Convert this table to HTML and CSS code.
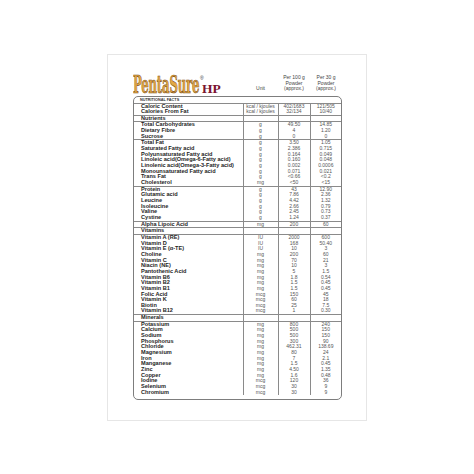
FILE: index.html
```html
<!DOCTYPE html>
<html>
<head>
<meta charset="utf-8">
<link rel="stylesheet" href="styles.css">
</head>
<body>
<div class="card">
  <div class="head">
    <div class="logo"><span class="brand">PentaSure</span><span class="reg">®</span><span class="hp">HP</span></div>
    <div class="hcol">Unit</div>
    <div class="hcol">Per 100 g<br>Powder<br>(approx.)</div>
    <div class="hcol">Per 30 g<br>Powder<br>(approx.)</div>
  </div>
  <div class="facts">
    <table>
      <colgroup><col class="c1"><col class="c2"><col class="c3"><col class="c4"></colgroup>
      <tbody class="title"><tr><td colspan="4">NUTRITIONAL FACTS</td></tr></tbody>
      <tbody>
        <tr><td>Caloric Content</td><td>kcal / kjoules</td><td>402/1683</td><td>121/505</td></tr>
        <tr><td>Calories From Fat</td><td>kcal / kjoules</td><td>32/134</td><td>10/40</td></tr>
      </tbody>
      <tbody><tr><td>Nutrients</td><td></td><td></td><td></td></tr></tbody>
      <tbody>
        <tr><td>Total Carbohydrates</td><td>g</td><td>49.50</td><td>14.85</td></tr>
        <tr><td>Dietary Fibre</td><td>g</td><td>4</td><td>1.20</td></tr>
        <tr><td>Sucrose</td><td>g</td><td>0</td><td>0</td></tr>
      </tbody>
      <tbody>
        <tr><td>Total Fat</td><td>g</td><td>3.50</td><td>1.05</td></tr>
        <tr><td>Saturated Fatty acid</td><td>g</td><td>2.386</td><td>0.715</td></tr>
        <tr><td>Polyunsaturated Fatty acid</td><td>g</td><td>0.164</td><td>0.049</td></tr>
        <tr><td>Linoleic acid(Omega-6-Fatty acid)</td><td>g</td><td>0.160</td><td>0.048</td></tr>
        <tr><td>Linolenic acid(Omega-3-Fatty acid)</td><td>g</td><td>0.002</td><td>0.0006</td></tr>
        <tr><td>Monounsaturated Fatty acid</td><td>g</td><td>0.071</td><td>0.021</td></tr>
        <tr><td>Trans Fat</td><td>g</td><td>&lt;0.66</td><td>&lt;0.2</td></tr>
        <tr><td>Cholesterol</td><td>mg</td><td>&lt;50</td><td>&lt;15</td></tr>
      </tbody>
      <tbody>
        <tr><td>Protein</td><td>g</td><td>43</td><td>12.90</td></tr>
        <tr><td>Glutamic acid</td><td>g</td><td>7.86</td><td>2.36</td></tr>
        <tr><td>Leucine</td><td>g</td><td>4.42</td><td>1.32</td></tr>
        <tr><td>Isoleucine</td><td>g</td><td>2.66</td><td>0.79</td></tr>
        <tr><td>Valine</td><td>g</td><td>2.45</td><td>0.73</td></tr>
        <tr><td>Cystine</td><td>g</td><td>1.24</td><td>0.37</td></tr>
      </tbody>
      <tbody><tr><td>Alpha Lipoic Acid</td><td>mg</td><td>200</td><td>60</td></tr></tbody>
      <tbody><tr><td>Vitamins</td><td></td><td></td><td></td></tr></tbody>
      <tbody>
        <tr><td>Vitamin A (RE)</td><td>IU</td><td>2000</td><td>600</td></tr>
        <tr><td>Vitamin D</td><td>IU</td><td>168</td><td>50.40</td></tr>
        <tr><td>Vitamin E (α-TE)</td><td>IU</td><td>10</td><td>3</td></tr>
        <tr><td>Choline</td><td>mg</td><td>200</td><td>60</td></tr>
        <tr><td>Vitamin C</td><td>mg</td><td>70</td><td>21</td></tr>
        <tr><td>Niacin (NE)</td><td>mg</td><td>10</td><td>3</td></tr>
        <tr><td>Pantothenic Acid</td><td>mg</td><td>5</td><td>1.5</td></tr>
        <tr><td>Vitamin B6</td><td>mg</td><td>1.8</td><td>0.54</td></tr>
        <tr><td>Vitamin B2</td><td>mg</td><td>1.5</td><td>0.45</td></tr>
        <tr><td>Vitamin B1</td><td>mg</td><td>1.5</td><td>0.45</td></tr>
        <tr><td>Folic Acid</td><td>mcg</td><td>150</td><td>45</td></tr>
        <tr><td>Vitamin K</td><td>mcg</td><td>60</td><td>18</td></tr>
        <tr><td>Biotin</td><td>mcg</td><td>25</td><td>7.5</td></tr>
        <tr><td>Vitamin B12</td><td>mcg</td><td>1</td><td>0.30</td></tr>
      </tbody>
      <tbody><tr><td>Minerals</td><td></td><td></td><td></td></tr></tbody>
      <tbody>
        <tr><td>Potassium</td><td>mg</td><td>800</td><td>240</td></tr>
        <tr><td>Calcium</td><td>mg</td><td>500</td><td>150</td></tr>
        <tr><td>Sodium</td><td>mg</td><td>500</td><td>150</td></tr>
        <tr><td>Phosphorus</td><td>mg</td><td>300</td><td>90</td></tr>
        <tr><td>Chloride</td><td>mg</td><td>462.31</td><td>138.69</td></tr>
        <tr><td>Magnesium</td><td>mg</td><td>80</td><td>24</td></tr>
        <tr><td>Iron</td><td>mg</td><td>7</td><td>2.1</td></tr>
        <tr><td>Manganese</td><td>mg</td><td>1.5</td><td>0.45</td></tr>
        <tr><td>Zinc</td><td>mg</td><td>4.50</td><td>1.35</td></tr>
        <tr><td>Copper</td><td>mg</td><td>1.6</td><td>0.48</td></tr>
        <tr><td>Iodine</td><td>mcg</td><td>120</td><td>36</td></tr>
        <tr><td>Selenium</td><td>mcg</td><td>30</td><td>9</td></tr>
        <tr><td>Chromium</td><td>mcg</td><td>30</td><td>9</td></tr>
      </tbody>
    </table>
  </div>
</div>
</body>
</html>
```
FILE: styles.css
```css
html, body {
  margin: 0;
  padding: 0;
  background: #ffffff;
}
body {
  width: 474px;
  height: 474px;
  display: flex;
  align-items: center;
  justify-content: center;
  font-family: "Liberation Sans", Arial, sans-serif;
}
.card {
  box-sizing: border-box;
  width: 260px;
  height: 367px;
  border: 1px solid #e6e6e6;
  padding: 19px 24px 0 25px;
  background: #fff;
}
.head {
  display: grid;
  grid-template-columns: 110px 35px 32px 32px;
  align-items: end;
  height: 21px;
  margin-bottom: 1px;
}
.logo {
  position: relative;
  height: 21px;
  white-space: nowrap;
}
.brand {
  display: inline-block;
  font-family: "DejaVu Serif", serif;
  font-weight: bold;
  font-size: 25px;
  line-height: 21px;
  color: #e3a845;
  -webkit-text-stroke: 0.7px #7a4a12;
  transform: scaleX(0.47);
  transform-origin: left center;
  letter-spacing: -0.5px;
}
.reg {
  position: absolute;
  left: 67px;
  top: 1px;
  font-size: 5px;
  color: #333;
}
.hp {
  position: absolute;
  left: 69px;
  top: 8px;
  font-family: "Liberation Serif", serif;
  font-weight: bold;
  font-size: 13.5px;
  line-height: 13px;
  color: #7b1530;
}
.hcol {
  text-align: center;
  font-size: 5px;
  line-height: 5.4px;
  color: #444;
  padding-bottom: 3px;
}
.facts {
  box-sizing: border-box;
  width: 209px;
  border: 1px solid #7d7d7d;
  border-radius: 5px;
  padding-bottom: 4px;
  overflow: hidden;
}
table {
  width: 207px;
  border-collapse: collapse;
  table-layout: fixed;
}
col.c1 { width: 109px; }
col.c2 { width: 35px; }
col.c3 { width: 32px; }
col.c4 { width: 31px; }
tbody + tbody {
  border-top: 1px solid #8a8a8a;
}
td {
  padding: 0;
  height: 5.65px;
  line-height: 5.65px;
  font-size: 5px;
  color: #555;
  text-align: center;
  white-space: nowrap;
  overflow: hidden;
}
td + td {
  border-left: 1px solid #8a8a8a;
}
td:first-child {
  text-align: left;
  padding-left: 7px;
  font-size: 5.6px;
  font-weight: bold;
  color: #1e1e1e;
}
.title td {
  height: 6px;
  line-height: 6px;
  font-size: 3.8px;
  color: #333;
  padding-left: 6px;
}
```
